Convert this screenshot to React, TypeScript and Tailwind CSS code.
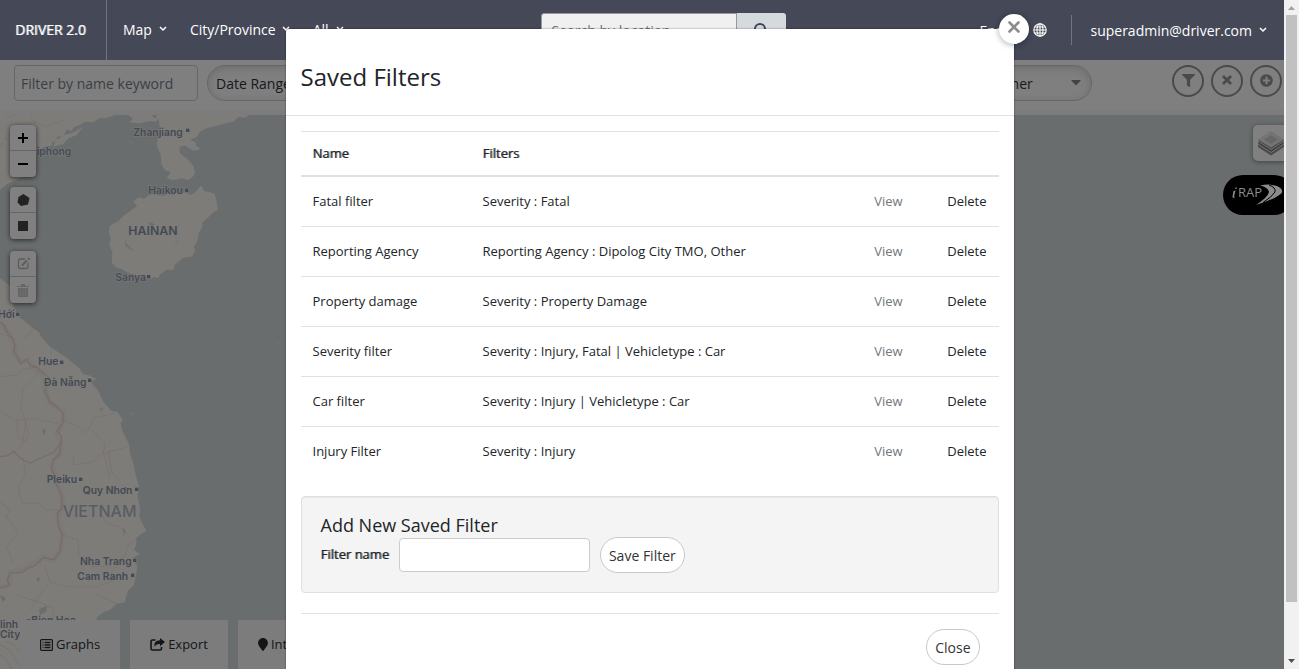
import React from "react";
import {
  FaFilter,
  FaPlusCircle,
  FaMapMarker,
  FaCaretDown,
} from "react-icons/fa";

const savedFilters = [
  { name: "Fatal filter", rule: "Severity : Fatal" },
  { name: "Reporting Agency", rule: "Reporting Agency : Dipolog City TMO, Other" },
  { name: "Property damage", rule: "Severity : Property Damage" },
  { name: "Severity filter", rule: "Severity : Injury, Fatal | Vehicletype : Car" },
  { name: "Car filter", rule: "Severity : Injury | Vehicletype : Car" },
  { name: "Injury Filter", rule: "Severity : Injury" },
];

function Chevron() {
  return (
    <svg width="8" height="6" viewBox="0 0 8 6" fill="none" stroke="currentColor" strokeWidth="1.5">
      <path d="M1 1l3 3 3-3" />
    </svg>
  );
}

function Globe() {
  return (
    <svg width="14" height="14" viewBox="0 0 14 14" fill="none" stroke="currentColor" strokeWidth="1.1">
      <circle cx="7" cy="7" r="6.2" />
      <ellipse cx="7" cy="7" rx="3" ry="6.2" />
      <path d="M7 .8v12.4M.8 7h12.4M1.6 4h10.8M1.6 10h10.8" />
    </svg>
  );
}

function Header() {
  return (
    <header className="flex h-[60px] shrink-0 items-center bg-[#444857] text-[14px] text-white">
      <a
        href="#home"
        className="flex h-full w-[107px] shrink-0 items-center border-r border-[#6d7389] pb-[2px] pl-[15px] [text-shadow:1px_0_0_#ffffff99]"
      >
        DRIVER 2.0
      </a>
      <nav className="flex shrink-0 items-center gap-[23px] pb-[2px] pl-4">
        <button className="flex items-center gap-[7px]">
          Map <Chevron />
        </button>
        <button className="flex items-center gap-[6px]">
          City/Province <Chevron />
        </button>
        <button className="flex items-center gap-[7px]">
          All <Chevron />
        </button>
      </nav>
      <form className="mx-auto flex h-[34px] pl-[3px]">
        <input
          aria-label="Search by location"
          placeholder="Search by location"
          className="w-[196px] rounded-l-[3px] border border-[#999] bg-[#f0f0f0] px-[10px] placeholder:text-[#6c757d]"
        />
        <button
          type="button"
          aria-label="Search"
          className="flex w-[49px] items-center justify-center rounded-r-[3px] bg-[#d5dadd] text-[#3f4458]"
        >
          <svg width="14" height="16" viewBox="0 0 14 16" fill="none" stroke="currentColor" strokeWidth="2">
            <circle cx="6" cy="7" r="5" />
            <path d="M9.5 10.5l4 4" />
          </svg>
        </button>
      </form>
      <button className="flex shrink-0 items-center gap-1">
        <span className="w-[50px] text-left">English</span>
        <Globe />
      </button>
      <div className="mr-[18px] ml-6 h-[30px] w-px shrink-0 bg-[#6f7486]" />
      <button className="mr-[17px] flex shrink-0 items-center gap-[7px]">
        superadmin@driver.com <Chevron />
      </button>
    </header>
  );
}

const round =
  "flex size-8 items-center justify-center rounded-full border-2 border-[#4a4a4a] pb-[2px] text-[#4a4a4a]";

function FilterBar() {
  return (
    <div className="flex h-[55px] shrink-0 items-start border-b-[5px] border-[#7c7c7c] bg-[#7f7f7f] pt-[5px] pr-[2px] pl-[14px] text-[14px] text-[#16181b]">
      <input
        aria-label="Filter by name keyword"
        placeholder="Filter by name keyword"
        className="h-9 w-[184px] rounded border border-[#666] px-[6px] placeholder:text-[#3a3f45]"
      />
      <button className="ml-[9px] h-9 w-[180px] rounded-full border border-[#666] px-2 text-left shadow-[inset_0_2px_8px_#00000026]">
        Date Range
      </button>
      <div className="relative ml-auto h-9 w-[124px]">
        <select
          aria-label="Weather"
          className="h-full w-full appearance-none rounded-full border border-[#666] pl-2 shadow-[inset_0_2px_8px_#00000026]"
        >
          <option>Weather</option>
        </select>
        <FaCaretDown className="pointer-events-none absolute top-[9px] right-2 size-4 text-[#444]" />
      </div>
      <div className="ml-20 flex gap-[7px]">
        <button aria-label="Apply filter" className={round}>
          <FaFilter size={13} />
        </button>
        <button aria-label="Clear filter" className={round}>
          <svg width="10" height="10" viewBox="0 0 10 10" stroke="currentColor" strokeWidth="2.800">
            <path d="M1 1l8 8M9 1L1 9" />
          </svg>
        </button>
        <button aria-label="Add filter" className={round}>
          <FaPlusCircle size={13} />
        </button>
      </div>
    </div>
  );
}

const places = [
  { name: "Zhanjiang", x: 400, y: 62, dx: 563, dy: 46 },
  { name: "iphong", x: 110, y: 120 },
  { name: "Haikou", x: 445, y: 238, dx: 560, dy: 226 },
  { name: "Sanya", x: 346, y: 498, dx: 446, dy: 485 },
  { name: "Hới", x: -6, y: 610, dx: 53, dy: 598 },
  { name: "Hue", x: 115, y: 751, dx: 185, dy: 742 },
  { name: "Đà Nẵng", x: 132, y: 812, dx: 269, dy: 796 },
  { name: "Pleiku", x: 140, y: 1105, dx: 242, dy: 1093 },
  { name: "Quy Nhơn", x: 248, y: 1137, dx: 410, dy: 1123 },
  { name: "Nha Trang", x: 240, y: 1349, dx: 404, dy: 1336 },
  { name: "Cam Ranh", x: 232, y: 1395, dx: 398, dy: 1381 },
  { name: "Bien Hoa", x: 94, y: 1526, dx: 86, dy: 1518 },
  { name: "linh", x: 0, y: 1538 },
  { name: "City", x: 0, y: 1569 },
];

function MapDrawing() {
  return (
    <svg className="absolute top-0 left-0" width="286" height="554" viewBox="0 0 858 1662">
      <g fill="#7d7c79">
        <path d="M0 0H345L318 10 300 8 280 22 255 20 240 30 222 36 215 48 200 44 190 62 168 66 175 75 158 80 155 92 130 95 108 120 60 190 20 208 0 225Z" />
        <path d="M165 80L190 60 215 55 250 35 230 60 205 70 190 88 160 95ZM390 78l6 2-3 5zM830 683l6 2-3 4zM390 894l8 1-3 4z" />
        <path d="M384 0L398 10 390 22 420 25 450 18 468 20 476 10 480 40 474 70 470 92 482 120 485 150 495 165 512 172 500 190 520 196 545 190 565 196 580 184 585 172 580 152 562 132 540 115 538 95 555 92 570 102 582 108 596 104 600 98 590 94 586 82 570 74 590 66 600 50 620 40 650 32 680 24 700 20 715 6 738 8 745 0H470L466 12 455 0Z" />
        <path d="M400 262L405 254 418 247 432 252 450 238 490 243 505 236 520 240 538 230 555 234 575 240 590 228 603 211 612 228 630 232 644 236 650 262 654 285 640 292 622 310 608 322 605 340 596 355 592 378 582 395 586 408 575 425 550 428 535 440 525 448 520 465 500 464 480 478 475 490 462 486 450 494 440 480 415 482 380 472 365 462 350 458 335 445 337 410 328 392 332 370 326 350 330 332 355 318 370 302 385 292 412 272Z" />
        <path d="M0 490L30 512 36 565 60 608 100 640 118 652 122 664 150 695 200 728 240 762 250 778 272 782 288 792 272 800 295 828 310 860 335 888 352 890 368 915 362 925 366 945 388 990 390 1015 400 1045 408 1085 416 1110 413 1145 420 1180 418 1205 430 1230 439 1248 425 1256 410 1268 408 1290 402 1305 420 1318 404 1325 400 1338 412 1352 408 1380 402 1410 385 1426 378 1445 375 1462 350 1466 330 1485 310 1492 290 1508 290 1530H60V1662H0Z" />
      </g>
      <path fill="#6a6d6e" d="M262 722l22 8-6 6zM415 1265l18 5 5 15-12 8-8-10zM445 322l12 2 8 6-14 2zM374 374l8 16 16 14-20-10zM298 880l12 0-4 8zM126 940l12 8-6 12zM118 1482l24-10-4 18-18 10zM108 1390l12-2-4 14zM0 1440l18 10-10 10zM368 1240l8 6-4 16z" />
      <g fill="none" stroke="#775f62" strokeLinejoin="round">
        <g strokeWidth="16" opacity=".12">
          <path d="M0 622L20 645 45 690 42 712 62 742 85 735 100 760 128 772 135 828 150 862 190 892 188 925 170 955 185 980 180 1015 155 1050 168 1095 188 1150 186 1180 172 1210 188 1260 180 1310 162 1335 130 1328 80 1360 30 1372 28 1410 0 1418" />
        </g>
        <path
          strokeWidth="3.5"
          opacity=".6"
          d="M0 622L12 630 20 650 38 670 45 690 42 712 52 725 62 746 80 732 90 750 108 756 128 772 150 790 140 812 135 828 145 850 150 862 175 880 190 895 188 925 172 948 185 965 182 985 180 1015 160 1035 155 1060 165 1085 168 1105 185 1140 186 1180 172 1195 175 1230 186 1260 180 1310 162 1335 130 1328 105 1352 80 1360 68 1372 30 1374 22 1395 28 1412 0 1418M0 1025L25 1022 40 1008 62 1030 90 1045 130 1025 160 1012 182 985"
        />
        <g strokeWidth="2" opacity=".5">
          <path d="M0 655l35 12M70 675l32-35M150 718l8-18M0 785l50-5 10-15 60-12M120 770l-50 50-8 60 15 40-10 70-30 30M0 890l45 25 60-4 70 15M50 915l5 50 22 15 8-20-10-45M190 915l45 20 20 20 10-10 15-35 60-15M270 940l45 45-5 30 20 70M310 1020l15-10 60-15M325 1010l10 60 25 30M220 1050l60-10 30-30M70 1030l5 50-20 40 12 45 50 0 20 20 45 0M15 1200l40 55-35 40 20 50M188 1260l45 15 5 50 40 30 60-5M135 1355l15 50-20 20-40 60M150 1400l50 15 90 0 45-15 0-30 40-50 10-30 40-30M290 1440l60 25M45 1440l70 20 45 20 0 50M300 1190l20 35 40 10 20 20M0 1160l30 25-10 25M15 10l30-10M0 100l15-30 20 5 10-25M90 0l10 20 40 15 50-20" />
        </g>
      </g>
      <g fill="none" stroke="#666a70" strokeWidth="2" opacity=".7">
        <path d="M0 1590q30 10 45 40l20 30M0 1620q20 10 35 40M20 1580q30 10 40 30M385 400l15 8M520 385l15-8-5 10M220 1025l2 25" />
      </g>
      <g
        fill="#444a54"
        stroke="#7d7c79"
        strokeWidth="3"
        paintOrder="stroke"
        className="font-['Inter',sans-serif] font-semibold"
      >
        {places.map((p) => (
          <g key={p.name}>
            <text x={p.x} y={p.y} fontSize="31">
              {p.name}
            </text>
            {p.dx !== undefined && <rect x={p.dx - 5} y={(p.dy ?? 0) - 5} width="10" height="10" />}
          </g>
        ))}
        <text x="385" y="361" fontSize="37">
          HAINAN
        </text>
        <text x="188" y="1205" fontSize="48" fill="#585d65" className="font-medium">
          VIETNAM
        </text>
      </g>
    </svg>
  );
}

const tools =
  "flex w-[26px] flex-col divide-y divide-[#666] overflow-hidden rounded bg-[#808080] shadow-[0_1px_5px_#000000a6] [&>button]:flex [&>button]:h-[26px] [&>button]:items-center [&>button]:justify-center";

const tab = "flex items-center bg-[#7c7c7c] px-5 text-[13px] text-[#131517]";

function MapArea() {
  return (
    <main className="relative min-h-0 flex-1 overflow-hidden bg-[#6a6d6e]">
      <MapDrawing />
      <div className="absolute top-[10px] left-[10px] flex flex-col gap-3">
        <div className="flex flex-col gap-[10px]">
          <div className={tools}>
            <button aria-label="Zoom in">
              <svg width="10" height="10" stroke="#000" strokeWidth="2">
                <path d="M5 0v10M0 5h10" />
              </svg>
            </button>
            <button aria-label="Zoom out">
              <svg width="10" height="10" stroke="#000" strokeWidth="2">
                <path d="M0 5h10" />
              </svg>
            </button>
          </div>
          <div className={tools}>
            <button aria-label="Draw a polygon">
              <svg width="13" height="12" fill="#222">
                <path d="M6.500 0L12.500 4 11 10.500 4 12 .500 8.500 1.500 3z" />
              </svg>
            </button>
            <button aria-label="Draw a rectangle">
              <svg width="10" height="10" fill="#222">
                <path d="M0 0h10v10H0z" />
              </svg>
            </button>
          </div>
        </div>
        <div className={tools}>
          <button aria-label="Edit layers">
            <svg width="13" height="13" viewBox="0 0 13 13" fill="none" stroke="#5c5c5c" strokeWidth="1.3">
              <path d="M8 2H3.500Q1.500 2 1.500 4v5.500q0 2 2 2H9q2 0 2-2V6" />
              <path d="M5 8.500L10 3.500M11 2.500l1.500-1.500" strokeWidth="2" />
            </svg>
          </button>
          <button aria-label="Delete layers">
            <svg width="12" height="13" viewBox="0 0 12 13" fill="#666">
              <path d="M4 0h4v2h4v1H0V2h4zM1 4h10v9H1z" />
              <path d="M3.500 5v7M6 5v7M8.500 5v7" stroke="#6f6f6f" />
            </svg>
          </button>
        </div>
      </div>
      <div className="absolute top-[10px] right-[-5px] flex flex-col items-end gap-[14px]">
        <button
          aria-label="Layers"
          className="flex size-9 items-center justify-center rounded-[5px] bg-[#808080] shadow-[0_1px_5px_#00000066]"
        >
          <svg width="26" height="26" viewBox="0 0 26 26">
            <path d="M0 17l13 8.500L26 17v-3H0z" fill="#4a4a4a" />
            <path d="M0 14l13 8.500L26 14v-3H0z" fill="#3f3f3f" stroke="#808080" strokeWidth=".8" />
            <path d="M0 11l13 8.500L26 11V9H0z" fill="#4a4a4a" stroke="#808080" strokeWidth=".8" />
            <path d="M13 1L26 9.500 13 17.500 0 9.500z" fill="#747474" />
            <path d="M13 5L20 9.500 13 14 6 9.500z" fill="#676767" />
          </svg>
        </button>
        <button aria-label="iRAP" className="mr-[-5px] h-10 w-[71px] rounded-[20px] bg-black">
          <svg width="71" height="40" viewBox="0 0 71 40" fill="#8c8c8c">
            <path d="M10.500 16l2-.6-1.500 6q.2.600 1 .2l-.3.800q-2.400.8-2.200-1zM12.500 12.500h1.400l-.4 1.400h-1.300z" />
            <text x="15" y="22" fontSize="13" className="font-['Open_Sans',sans-serif]">
              RAP
            </text>
            <path d="M37 10.500Q47 8.500 54 11 60 13.500 59 17.500 55 23 33 30 45 22 46 17 45 12 37 10.500Z" />
            <path d="M46 10Q53 12.500 52 17 49 22 40 27.500" fill="none" stroke="#000" strokeWidth="1" />
          </svg>
        </button>
      </div>
      <div className="absolute bottom-0 left-5 flex h-[49px] gap-[10px]">
        <button className={tab}>
          <svg className="mr-[3px]" width="13" height="12" viewBox="0 0 13 12" fill="none" stroke="currentColor">
            <rect x=".6" y=".6" width="11.800" height="10.800" rx="1" strokeWidth="1.200" />
            <path d="M2.500 3.500h1M4.500 3.500h6M2.500 6h1M4.500 6h6M2.500 8.500h1M4.500 8.500h6" strokeWidth="1.300" />
          </svg>
          Graphs
        </button>
        <button className={tab}>
          <svg className="mr-[3px]" width="15" height="13" viewBox="0 0 15 13" fill="none" stroke="currentColor">
            <path d="M5.500 2H2.500Q1 2 1 3.500v7Q1 12 2.500 12h7.500q1.500 0 1.500-1.500V9" strokeWidth="1.600" />
            <path d="M10 0l5 4-5 4.200V6Q6 5.500 4.500 9 3.500 2.500 10 2.300z" fill="currentColor" stroke="none" />
          </svg>
          Export
        </button>
        <button className={tab}>
          <FaMapMarker className="mr-[3px] h-[13px] w-[10px]" />
          Interventions
        </button>
      </div>
    </main>
  );
}

const pill = "h-9 rounded-[18px] border border-[#c8c8c8] bg-white px-2 text-[14px] text-[#333]";

function SavedFiltersDialog() {
  return (
    <section
      role="dialog"
      aria-labelledby="dialog-title"
      className="relative mt-[29px] min-h-screen w-[728px] max-w-full rounded-t-[3px] bg-white text-[#212529] shadow-[0_0_2px_#00000080]"
    >
      <button
        aria-label="Close dialog"
        className="absolute -top-[15px] -right-[15px] flex size-[30px] items-center justify-center rounded-full bg-white pb-1 text-[#8c8c8c] shadow-[0_1px_6px_#00000055]"
      >
        <svg width="12" height="12" viewBox="0 0 12 12" stroke="currentColor" strokeWidth="2.600" strokeLinecap="round">
          <path d="M1.500 1.500l9 9M10.500 1.500l-9 9" />
        </svg>
      </button>
      <h2 id="dialog-title" className="flex h-[87px] items-center border-b border-[#dee2e6] px-[15px] pt-[10px] text-[24px]">
        Saved Filters
      </h2>
      <div className="px-[15px] pt-[15px]">
        <table className="w-full border-separate border-spacing-0 text-left text-[13px]">
          <thead>
            <tr className="[&>th]:h-[46px] [&>th]:border-t [&>th]:border-b-2 [&>th]:border-[#dee2e6] [&>th]:px-3 [&>th]:font-normal [&>th]:[text-shadow:1px_0_0_#21252999]">
              <th className="w-[170px]">Name</th>
              <th>Filters</th>
              <th aria-label="View" />
              <th aria-label="Delete" />
            </tr>
          </thead>
          <tbody>
            {savedFilters.map((f) => (
              <tr
                key={f.name}
                className="[&>td]:h-[50px] [&>td]:border-b [&>td]:border-[#dee2e6] [&>td]:px-3 last:[&>td]:border-b-0"
              >
                <td>{f.name}</td>
                <td>{f.rule}</td>
                <td className="w-[73px]">
                  <button className="text-[#73777b]">View</button>
                </td>
                <td className="w-[63px] text-right">
                  <button>Delete</button>
                </td>
              </tr>
            ))}
          </tbody>
        </table>
        <form className="mt-[19px] h-[97px] rounded border border-[#dfdfdf] bg-[#f4f4f4] px-[19px] pt-4 shadow-[inset_0_1px_1px_#0000000d]">
          <h3 className="text-[18px] leading-6">Add New Saved Filter</h3>
          <div className="flex items-center">
            <label htmlFor="filter-name" className="text-[13px] [text-shadow:1px_0_0_#21252999]">
              Filter name
            </label>
            <input
              id="filter-name"
              className="mr-[10px] ml-[10px] h-[34px] w-[191px] rounded border border-[#ccc] bg-white px-2"
            />
            <button type="button" className={pill}>
              Save Filter
            </button>
          </div>
        </form>
        <div className="mt-5 flex justify-end border-t border-[#dee2e6] pt-[15px] pr-[19px]">
          <button className={pill}>Close</button>
        </div>
      </div>
    </section>
  );
}

function Scrollbar() {
  return (
    <div className="relative z-20 flex w-[15px] shrink-0 flex-col items-center bg-[#f1f1f1]">
      <svg width="15" height="15" fill="#a3a3a3">
        <path d="M4 10h7L7.500 6z" />
      </svg>
      <div className="w-[11px] grow-[587] bg-[#c1c1c1]" />
      <div className="grow-[52]" />
      <svg width="15" height="15" fill="#505050">
        <path d="M4 5h7L7.500 9z" />
      </svg>
    </div>
  );
}

export default function App() {
  return (
    <div className="relative flex h-screen overflow-hidden font-['Open_Sans',sans-serif]">
      <div className="flex min-w-0 flex-1 flex-col">
        <Header />
        <FilterBar />
        <MapArea />
      </div>
      <Scrollbar />
      <div className="absolute inset-0 z-10 flex items-start justify-center overflow-hidden">
        <SavedFiltersDialog />
      </div>
    </div>
  );
}
